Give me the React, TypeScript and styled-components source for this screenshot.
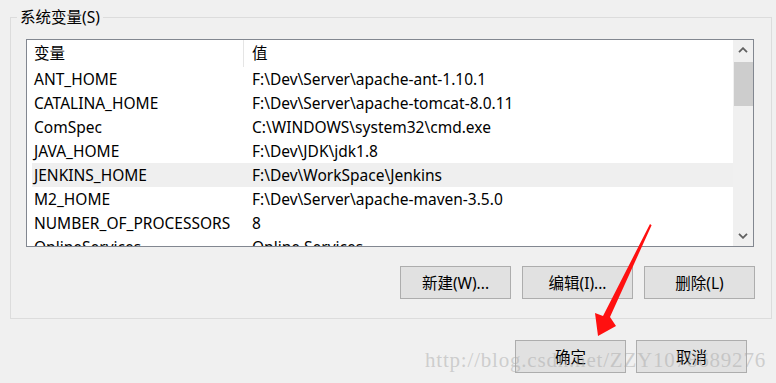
import styled, { createGlobalStyle } from "styled-components"

const Global = createGlobalStyle`
  html, body {
    margin: 0;
    padding: 0;
    background: #f0f0f0;
  }
  body {
    font-family: "Noto Sans", "Noto Sans CJK SC", sans-serif;
    font-size: 15.5px;
    color: #000;
  }
`

interface RowData {
  name: string
  value: string
  hover?: boolean
}

const rows: RowData[] = [
  { name: "ANT_HOME", value: "F:\\Dev\\Server\\apache-ant-1.10.1" },
  { name: "CATALINA_HOME", value: "F:\\Dev\\Server\\apache-tomcat-8.0.11" },
  { name: "ComSpec", value: "C:\\WINDOWS\\system32\\cmd.exe" },
  { name: "JAVA_HOME", value: "F:\\Dev\\JDK\\jdk1.8" },
  { name: "JENKINS_HOME", value: "F:\\Dev\\WorkSpace\\Jenkins", hover: true },
  { name: "M2_HOME", value: "F:\\Dev\\Server\\apache-maven-3.5.0" },
  { name: "NUMBER_OF_PROCESSORS", value: "8" },
  { name: "OnlineServices", value: "Online Services" },
]

export default function App() {
  return (
    <>
      <Global />
      <Page>
        <Group>
          <Legend>系统变量(S)</Legend>
          <List>
            <Table>
              <Header>
                <HeadCell $first>变量</HeadCell>
                <HeadCell>值</HeadCell>
              </Header>
              {rows.map((r) => (
                <Row key={r.name} $hover={r.hover}>
                  <Cell $first>{r.name}</Cell>
                  <Cell>{r.value}</Cell>
                </Row>
              ))}
            </Table>
            <Scrollbar>
              <ScrollBtn>
                <Chevron up />
              </ScrollBtn>
              <Track>
                <Thumb />
              </Track>
              <ScrollBtn>
                <Chevron />
              </ScrollBtn>
            </Scrollbar>
          </List>
          <ButtonRow>
            <Button>新建(W)...</Button>
            <Button>编辑(I)...</Button>
            <Button>删除(L)</Button>
          </ButtonRow>
        </Group>
        <Footer>
          <Button>确定</Button>
          <Button>取消</Button>
        </Footer>
        <Arrow viewBox="0 0 70 120" width="70" height="120">
          <polygon
            points="60,4 61.6,5.2 20,97 26,106 8,116 5,93 13,96"
            fill="#ff1010"
          />
        </Arrow>
        <Watermark>http://blog.csdn.net/ZZY1078689276</Watermark>
      </Page>
    </>
  )
}

function Chevron({ up }: { up?: boolean }) {
  return (
    <svg width="10" height="6" viewBox="0 0 10 6">
      <path
        d={up ? "M1 5.2 L5 1.2 L9 5.2" : "M1 0.8 L5 4.8 L9 0.8"}
        fill="none"
        stroke="#606060"
        strokeWidth="1.8"
      />
    </svg>
  )
}

//style

const Page = styled.div`
  position: relative;
  width: 776px;
  height: 383px;
  overflow: hidden;
  padding-top: 17px;
  box-sizing: border-box;
`
const Group = styled.div`
  position: relative;
  margin-left: 10px;
  width: 762px;
  height: 302px;
  box-sizing: border-box;
  border: 1px solid #dcdcdc;
  padding: 21px 16px 0 15px;
`
const Legend = styled.span`
  position: absolute;
  left: 6px;
  top: -11px;
  padding: 0 3px;
  background: #f0f0f0;
  line-height: 20px;
`
const List = styled.div`
  display: flex;
  width: 728px;
  height: 208px;
  box-sizing: border-box;
  border: 1px solid #828790;
  background: #fff;
  overflow: hidden;
`
const Table = styled.div`
  flex: 1;
  padding-left: 5px;
  overflow: hidden;
`
const Header = styled.div`
  display: flex;
  height: 27px;
  align-items: center;
`
const HeadCell = styled.div<{ $first?: boolean }>`
  width: ${(p) => (p.$first ? "212px" : "auto")};
  box-sizing: border-box;
  padding-left: ${(p) => (p.$first ? "2px" : "8px")};
  height: 100%;
  display: flex;
  align-items: center;
  padding-bottom: 2px;
  border-right: ${(p) => (p.$first ? "1px solid #e5e5e5" : "none")};
`
const Row = styled.div<{ $hover?: boolean }>`
  display: flex;
  align-items: center;
  height: 24px;
  background: ${(p) => (p.$hover ? "#efefef" : "transparent")};
`
const Cell = styled.div<{ $first?: boolean }>`
  width: ${(p) => (p.$first ? "212px" : "auto")};
  box-sizing: border-box;
  padding-left: ${(p) => (p.$first ? "2px" : "8px")};
  white-space: nowrap;
`
const Scrollbar = styled.div`
  display: flex;
  flex-direction: column;
  width: 20px;
  background: #f0f0f0;
`
const ScrollBtn = styled.div`
  height: 20px;
  display: flex;
  align-items: center;
  justify-content: center;
`
const Track = styled.div`
  flex: 1;
  padding: 2px 0 0 1px;
`
const Thumb = styled.div`
  height: 44px;
  background: #cdcdcd;
`
const ButtonRow = styled.div`
  display: flex;
  justify-content: flex-end;
  gap: 11px;
  margin-top: 19px;
`
const Button = styled.button`
  width: 111px;
  height: 33px;
  box-sizing: border-box;
  border: 1px solid #adadad;
  background: #e1e1e1;
  font-family: "Noto Sans", "Noto Sans CJK SC", sans-serif;
  font-size: 15.5px;
  color: #000;
  padding: 0;
`
const Footer = styled.div`
  display: flex;
  justify-content: flex-end;
  gap: 10px;
  margin-top: 21px;
  padding-right: 29px;
`
const Arrow = styled.svg`
  position: absolute;
  left: 590px;
  top: 220px;
`
const Watermark = styled.div`
  position: absolute;
  left: 425px;
  top: 348px;
  font-family: "Liberation Serif", serif;
  font-size: 21px;
  letter-spacing: 0.8px;
  color: rgba(170, 170, 170, 0.5);
  white-space: nowrap;
  pointer-events: none;
`
